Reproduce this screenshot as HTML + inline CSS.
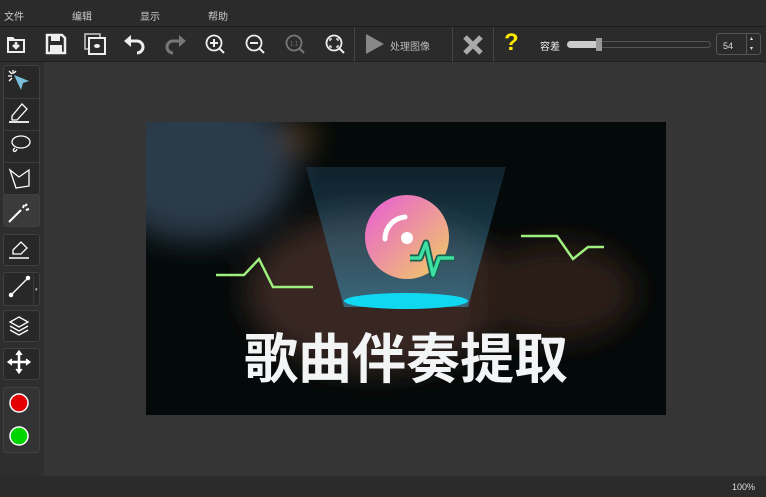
<!DOCTYPE html>
<html><head><meta charset="utf-8"><style>
*{margin:0;padding:0;box-sizing:border-box}
body{width:766px;height:497px;background:#353535;font-family:"Liberation Sans","Noto Sans CJK SC",sans-serif;color:#ddd;position:relative;overflow:hidden}
#menu{position:absolute;left:0;top:0;width:766px;height:27px;background:#2b2b2b;border-bottom:1px solid #1c1c1c;font-size:10px;color:#ccc}
#menu span{position:absolute;top:8px}
#tb{position:absolute;left:0;top:27px;width:766px;height:35px;background:#2b2b2b;border-bottom:1px solid #1e1e1e}
#tb svg{position:absolute}
.sep{position:absolute;top:0;width:1px;height:35px;background:#444}
#left{position:absolute;left:0;top:62px;width:44px;height:414px;background:#2e2e2e}
.btn{position:absolute;left:3px;width:37px;background:#282828;border:1px solid #404040;border-radius:3px}
#status{position:absolute;left:0;top:476px;width:766px;height:21px;background:#2b2b2b;font-size:9px;color:#ddd}
#img{position:absolute;left:146px;top:122px;width:520px;height:293px;background:#030909;overflow:hidden}
</style></head><body>
<div id="menu"><span style="left:4px">文件</span><span style="left:72px">编辑</span><span style="left:140px">显示</span><span style="left:208px">帮助</span></div>
<div id="tb">
<svg style="left:5px;top:6px" width="22" height="22" viewBox="0 0 22 22"><path d="M2 4h6l2 2h10v14H2z" fill="#eee"/><rect x="4" y="8" width="14" height="10" fill="#2b2b2b"/><path d="M11 9v6M8 12l3 3 3-3" stroke="#eee" stroke-width="2.5" fill="none"/></svg>
<svg style="left:45px;top:6px" width="22" height="22" viewBox="0 0 22 22"><path d="M2 2h15l3 3v15H2z" fill="none" stroke="#eee" stroke-width="2.5"/><rect x="6" y="3" width="9" height="5" fill="#eee"/><rect x="5" y="12" width="12" height="7" fill="#eee"/></svg>
<svg style="left:84px;top:6px" width="22" height="22" viewBox="0 0 22 22"><rect x="1" y="1" width="15" height="15" fill="none" stroke="#ccc" stroke-width="1.5"/><rect x="5" y="5" width="16" height="16" fill="#2b2b2b" stroke="#eee" stroke-width="2"/><ellipse cx="13" cy="13" rx="3" ry="2" fill="#eee"/></svg>
<svg style="left:124px;top:6px" width="22" height="22" viewBox="0 0 22 22"><path d="M5 8h8a6 6 0 0 1 0 12" fill="none" stroke="#eee" stroke-width="3"/><path d="M0 8l7-6v12z" fill="#eee"/></svg>
<svg style="left:164px;top:6px" width="22" height="22" viewBox="0 0 22 22"><path d="M17 8H9a6 6 0 0 0 0 12" fill="none" stroke="#777" stroke-width="3"/><path d="M22 8l-7-6v12z" fill="#777"/></svg>
<svg style="left:204px;top:6px" width="22" height="22" viewBox="0 0 22 22"><circle cx="10" cy="10" r="7.5" fill="none" stroke="#eee" stroke-width="1.8"/><path d="M15 15l5 5M6 10h8M10 6v8" stroke="#eee" stroke-width="2"/></svg>
<svg style="left:244px;top:6px" width="22" height="22" viewBox="0 0 22 22"><circle cx="10" cy="10" r="7.5" fill="none" stroke="#eee" stroke-width="1.8"/><path d="M15 15l5 5M6 10h8" stroke="#eee" stroke-width="2"/></svg>
<svg style="left:284px;top:6px" width="22" height="22" viewBox="0 0 22 22"><circle cx="10" cy="10" r="7.5" fill="none" stroke="#777" stroke-width="1.8"/><path d="M15 15l5 5" stroke="#777" stroke-width="2"/><text x="10" y="12.5" font-size="6" fill="#777" text-anchor="middle">1:1</text></svg>
<svg style="left:324px;top:6px" width="22" height="22" viewBox="0 0 22 22"><circle cx="10" cy="10" r="7.5" fill="none" stroke="#eee" stroke-width="1.8"/><path d="M15 15l5 5" stroke="#eee" stroke-width="2"/><path d="M6 8V6h2M12 6h2v2M14 12v2h-2M8 14H6v-2" stroke="#eee" stroke-width="1.3" fill="none"/></svg>
<div class="sep" style="left:354px"></div>
<svg style="left:365px;top:6px" width="20" height="22" viewBox="0 0 20 22"><path d="M1 1l18 10L1 21z" fill="#888"/></svg>
<span style="position:absolute;left:390px;top:11px;font-size:10px;color:#bbb">处理图像</span>
<div class="sep" style="left:452px"></div>
<svg style="left:462px;top:7px" width="22" height="22" viewBox="0 0 22 22"><path d="M3 3l16 16M19 3L3 19" stroke="#aaa" stroke-width="5"/></svg>
<div class="sep" style="left:493px"></div>
<span style="position:absolute;left:504px;top:2px;font-size:24px;font-weight:bold;color:#ffea00">?</span>
<span style="position:absolute;left:540px;top:11px;font-size:10px;color:#eee">容差</span>
<div style="position:absolute;left:567px;top:14px;width:144px;height:7px;border:1px solid #555;border-radius:4px;background:#2b2b2b"></div>
<div style="position:absolute;left:567px;top:14px;width:32px;height:7px;border-radius:4px;background:#ccc"></div>
<div style="position:absolute;left:596px;top:11px;width:6px;height:13px;background:#999"></div>
<div style="position:absolute;left:716px;top:6px;width:45px;height:22px;border:1px solid #555;border-radius:3px;font-size:9px;color:#ddd;padding:7px 0 0 6px">54<div style="position:absolute;left:29px;top:0;width:1px;height:20px;background:#555"></div><span style="position:absolute;left:33px;top:1px;font-size:6px">▴</span><span style="position:absolute;left:33px;top:11px;font-size:6px">▾</span></div>
</div>
<div id="left">
<div class="btn" style="top:3px;height:130px"></div>
<div style="position:absolute;left:4px;top:36px;width:35px;height:1px;background:#3c3c3c"></div>
<div style="position:absolute;left:4px;top:68px;width:35px;height:1px;background:#3c3c3c"></div>
<div style="position:absolute;left:4px;top:100px;width:35px;height:1px;background:#3c3c3c"></div>
<div class="btn" style="top:132px;height:33px;background:#3b3b3b"></div>
<div class="btn" style="top:172px;height:32px"></div>
<div class="btn" style="top:210px;height:34px"></div>
<div style="position:absolute;left:33px;top:211px;width:1px;height:32px;background:#3c3c3c"></div>
<div class="btn" style="top:248px;height:32px"></div>
<div class="btn" style="top:286px;height:32px"></div>
<div class="btn" style="top:325px;height:66px;background:#333"></div>
<svg style="position:absolute;left:0;top:0" width="44" height="414" viewBox="0 0 44 414">
<g stroke="#fff" stroke-width="1.3" fill="none">
<path d="M13 8v4M8 14h4M9 9l3 3M16 9l-2 2M9 19l3-3"/>
<path d="M14 13l15 6-6 2-2 7z" fill="#79bfdc" stroke="none"/>
<path d="M12 54l10-12 5 5-10 11h-5z"/><path d="M9 60h20" stroke-width="1.8"/>
<ellipse cx="21" cy="80" rx="9" ry="6"/><path d="M15 86c-4 2 0 6 2 1"/>
<path d="M10 108l9 7 10-7v16l-13 2z"/>
<path d="M9 160l12-12M23 146l1-3M26 148l3-1M25 144l2-2" stroke-width="2"/>
<path d="M13 188l8-8 6 6-6 6h-8z"/><path d="M9 196h20" stroke-width="1.5"/>
<path d="M11 233l17-17"/><circle cx="11" cy="233" r="1.6" fill="#fff"/><circle cx="28" cy="216" r="1.6" fill="#fff"/>
<path d="M19 255l9 5-9 5-9-5z M10 264l9 5 9-5M10 268l9 5 9-5"/>
<path d="M19 290v20M9 300h20" stroke-width="2.5"/><path d="M16 293l3-4 3 4M16 307l3 4 3-4M12 297l-4 3 4 3M26 297l4 3-4 3" fill="#fff"/>
</g>
<text x="35" y="229" font-size="5" fill="#ccc">▾</text>
<circle cx="19" cy="341" r="9" fill="#e30000" stroke="#fff" stroke-width="1.5"/>
<circle cx="19" cy="374" r="9" fill="#00d400" stroke="#fff" stroke-width="1.5"/>
</svg>
</div>
<div id="img">
<svg width="520" height="293" viewBox="0 0 520 293">
<defs>
<linearGradient id="beam" x1="0" y1="0" x2="0" y2="1"><stop offset="0" stop-color="#2a5a7a" stop-opacity="0.3"/><stop offset="1" stop-color="#3aa0c8" stop-opacity="0.55"/></linearGradient>
<linearGradient id="disc" x1="0" y1="0" x2="1" y2="1"><stop offset="0" stop-color="#e85ad8"/><stop offset="1" stop-color="#f0d060"/></linearGradient>
<filter id="bl" x="-50%" y="-50%" width="200%" height="200%"><feGaussianBlur stdDeviation="15"/></filter>
</defs>
<rect width="520" height="293" fill="#040909"/>
<g filter="url(#bl)">
<ellipse cx="50" cy="40" rx="100" ry="80" fill="#2a3a48"/>
<ellipse cx="230" cy="170" rx="130" ry="80" fill="#382820"/>
<ellipse cx="410" cy="170" rx="80" ry="50" fill="#2c1c14"/>
<circle cx="155" cy="15" r="14" fill="#7a5420" opacity="0.7"/>
</g>
<path d="M160 45h200l-38 140h-124z" fill="url(#beam)"/>
<ellipse cx="260" cy="179" rx="62" ry="8" fill="#10d8f0"/>
<circle cx="261" cy="115" r="42" fill="url(#disc)"/>
<path d="M239 117a22 22 0 0 1 20-22" stroke="#fff" stroke-width="5" fill="none" stroke-linecap="round"/>
<circle cx="261" cy="116" r="6" fill="#fff"/>
<path d="M264 136h10l6-15 7 32 6-17h15" stroke="#1a6050" stroke-width="7" fill="none" stroke-linejoin="round"/>
<path d="M264 136h10l6-15 7 32 6-17h15" stroke="#3de0a0" stroke-width="3.5" fill="none" stroke-linejoin="round"/>
<path d="M70 153h28l15-16 14 28h40" stroke="#a0f080" stroke-width="2.5" fill="none"/>
<path d="M375 114h36l16 23 15-12h16" stroke="#a0f080" stroke-width="2.5" fill="none"/>
<text x="260" y="256" font-size="54" font-weight="bold" fill="#f2f4f6" text-anchor="middle" font-family="'Noto Sans CJK SC',sans-serif">歌曲伴奏提取</text>
</svg>
</div>
<div id="status"><span style="position:absolute;left:732px;top:6px">100%</span></div>
</body></html>
